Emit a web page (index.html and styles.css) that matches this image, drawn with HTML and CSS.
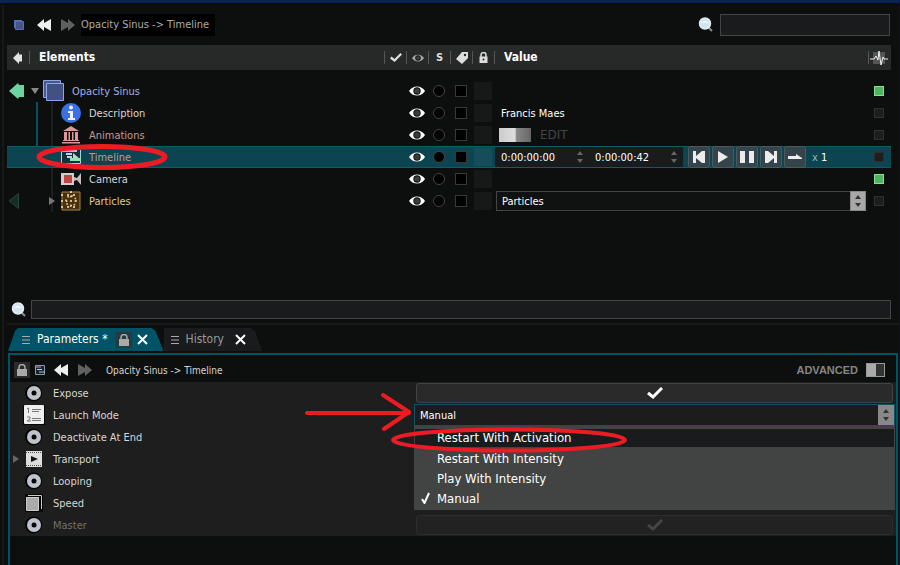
FILE: index.html
```
<!DOCTYPE html>
<html lang="en">
<head>
    <meta charset="UTF-8">
    <meta name="viewport" content="width=device-width, initial-scale=1.0">
    <title>Opacity Sinus</title>
    <link rel="stylesheet" href="styles.css">
</head>
<body>
    <!-- icons used more than once -->
    <svg class="sprite" aria-hidden="true">
        <symbol id="rewind" viewBox="0 0 14 12"><path d="M7 0v4l7-4v12L7 8v4L0 6z"/></symbol>
        <symbol id="check" viewBox="0 0 16 12"><path d="M1 6l5 4 9-9" fill="none" stroke="currentColor" stroke-width="3"/></symbol>
        <symbol id="eye" viewBox="0 0 16 10"><path d="M0 5Q3 .5 8 .5T16 5q-3 4.500-8 4.500T0 5z" fill="currentColor"/><circle cx="8" cy="5" r="3.700" fill="#0d0f0e"/><circle cx="8" cy="5" r="2.700" fill="#3a3c3c"/></symbol>
        <symbol id="lock" viewBox="0 0 10 12"><path d="M2 6V3.500a3 3 0 0 1 6 0V6" fill="none" stroke="currentColor" stroke-width="1.500"/><path d="M0 5h10v7H0z"/></symbol>
        <symbol id="glass" viewBox="0 0 16 16"><path d="M10 10l4 4" stroke="#8a8f92" stroke-width="2"/><circle cx="7" cy="6.500" r="5.500" fill="#cfe6f2" stroke="#e8eced" stroke-width="1.500"/><path d="M3 6q4-4 8 0-4-1-8 0z" fill="#fff"/></symbol>
        <symbol id="updown" viewBox="0 0 6 12"><path d="M3 0l3 4H0zM0 8h6l-3 4z"/></symbol>
        <symbol id="cross" viewBox="0 0 11 11"><path d="M1 1l9 9M10 1l-9 9" stroke="#fff" stroke-width="2"/></symbol>
        <symbol id="menu" viewBox="0 0 8 8"><path d="M0 .5h8M0 4h8M0 7.500h8" stroke="currentColor"/></symbol>
        <symbol id="ring" viewBox="0 0 18 18"><circle cx="8.500" cy="9" r="8.500" fill="#050505"/><circle cx="9" cy="9" r="7" fill="#bfc4cb"/><circle cx="9" cy="9" r="2.500" fill="#050505"/></symbol>
        <symbol id="skip" viewBox="0 0 14 12"><path d="M1 0h3v5l6-5h3v12h-3L4 7v5H1z"/></symbol>
    </svg>

    <main>
        <header class="toolbar">
            <svg class="layers-small" viewBox="0 0 10 10"><path d="M0 0h8v8H0z" fill="#5b6fae"/><path d="M1.500 1.500h8v8h-8z" fill="#44558c" stroke="#5b6fae"/></svg>
            <button class="icon-btn" aria-label="Back"><svg class="nav"><use href="#rewind"/></svg></button>
            <button class="icon-btn forward" aria-label="Forward"><svg class="nav"><use href="#rewind"/></svg></button>
            <span class="path">Opacity Sinus -&gt; Timeline</span>
            <svg class="glass"><use href="#glass"/></svg>
            <input class="search" type="text" aria-label="Search elements">
        </header>

        <section class="tree">
            <div class="row head">
                <div class="title">
                    <svg class="head-arrow" viewBox="0 0 9 12"><path d="M0 6l6-6v2.500h3v7H6V12z" fill="#e2e2e2"/></svg>
                    <span class="elements">Elements</span>
                </div>
                <span class="cell"><svg class="check-small"><use href="#check"/></svg></span>
                <span class="cell"><svg class="eye-small"><use href="#eye"/></svg></span>
                <span class="cell">S</span>
                <span class="cell"><svg class="tag" viewBox="0 0 12 12"><path d="M6 0h6v6l-6 6-6-5z" fill="#ddd"/><circle cx="9" cy="3" r="1.200" fill="#262827"/></svg></span>
                <span class="cell"><svg class="lock-small" viewBox="0 0 9 11"><path d="M2 5V3a2.500 2.500 0 0 1 5 0v2" fill="none" stroke="#ddd" stroke-width="1.500"/><path d="M.5 4.500h8V11h-8z" fill="#ddd"/><circle cx="4.500" cy="7.500" r="1" fill="#262827"/></svg></span>
                <span class="cell value-head">Value</span>
                <span class="cell pulse-head"><svg class="pulse" viewBox="0 0 18 14"><path d="M3 1h12v12H3z" fill="#555"/><path d="M0 8h4l2-3 2 4 1-9 2 14 2-8 1 2h4" fill="none" stroke="#eee"/></svg></span>
            </div>

            <div class="row">
                <div class="name root">
                    <svg class="pin" viewBox="0 0 15 16"><path d="M0 8l9-8 1 2h5v12h-5l-1 2z" fill="#6dd3a0"/></svg>
                    <svg class="fold" viewBox="0 0 8 6"><path d="M0 0h8L4 6z" fill="#888"/></svg>
                    <svg class="layers" viewBox="0 0 22 22"><path d="M.5.5h17v17H.5z" fill="#4a5a8f" stroke="#8fa5e8"/><path d="M3.500 3.500h17v17h-17z" fill="#425082" stroke="#8fa5e8"/></svg>
                    <span class="lavender">Opacity Sinus</span>
                </div>
                <svg class="eye"><use href="#eye"/></svg><i class="solo"></i><i class="tag-box"></i><i class="lock-box"></i>
                <div></div>
                <i class="led on"></i>
            </div>
            <div class="row">
                <div class="name branch">
                    <svg class="item" viewBox="0 0 20 20"><circle cx="10" cy="10" r="10" fill="#3a70e2"/><circle cx="10" cy="4.500" r="2" fill="#eef"/><path d="M7 8h5v7h2v2H7v-2h2v-5H7z" fill="#eef"/></svg>
                    <span>Description</span>
                </div>
                <svg class="eye"><use href="#eye"/></svg><i class="solo"></i><i class="tag-box"></i><i class="lock-box"></i>
                <div class="value text">Francis Maes</div>
                <i class="led"></i>
            </div>
            <div class="row">
                <div class="name branch">
                    <svg class="item" viewBox="0 0 20 20"><path d="M10 1l8 5H2zM3 7h3v8H3zM7.500 7h1.500v8H7.500zM11 7h1.500v8H11zM14 7h3v8h-3zM2 15h16v1H2zM1 17h18v1.500H1z" fill="#d99a98"/></svg>
                    <span class="rose">Animations</span>
                </div>
                <svg class="eye"><use href="#eye"/></svg><i class="solo"></i><i class="tag-box"></i><i class="lock-box"></i>
                <div class="value anim"><span class="ramp"></span><button class="edit">EDIT</button></div>
                <i class="led"></i>
            </div>
            <div class="row selected">
                <div class="name branch last-branch">
                    <svg class="item" viewBox="0 0 20 20"><path d="M0 3h20v14H0z" fill="#12313b"/><path d="M.5 3v13.500h19V3" fill="none" stroke="#a9d3e8"/><path d="M1 3h15v2H1z" fill="#ee9ada"/><path d="M5 6h6v2H5zM6 9h5v2H6z" fill="#c8cbf5"/><path d="M12 6l7 6h-7z" fill="#c5d3d0"/><path d="M9 11h11v3H9z" fill="#8fe5ab"/></svg>
                    <span class="rose">Timeline</span>
                    <svg class="mark mark-timeline" viewBox="0 0 134 28"><ellipse cx="67" cy="14" rx="63" ry="10.500" fill="none" stroke="#ed1c24" stroke-width="5"/></svg>
                </div>
                <svg class="eye"><use href="#eye"/></svg><i class="solo"></i><i class="tag-box"></i><i class="lock-box"></i>
                <div class="value time">
                    <div class="times">
                        <input type="text" value="0:00:00:00" aria-label="Position">
                        <svg class="updown"><use href="#updown"/></svg>
                        <input type="text" value="0:00:00:42" aria-label="Duration">
                        <svg class="updown"><use href="#updown"/></svg>
                    </div>
                    <div class="transport">
                        <button aria-label="To start"><svg><use href="#skip"/></svg></button>
                        <button aria-label="Play"><svg viewBox="0 0 14 12"><path d="M2 0l10 6-10 6z"/></svg></button>
                        <button aria-label="Pause"><svg viewBox="0 0 14 12"><path d="M0 0h5v12H0zM9 0h5v12H9z"/></svg></button>
                        <button aria-label="To end"><svg class="flip"><use href="#skip"/></svg></button>
                        <button aria-label="Direction"><svg viewBox="0 0 14 12"><path d="M0 5h8V3l6 4v1H0z"/></svg></button>
                    </div>
                    <span class="rate"><span class="times-sign">x</span> 1</span>
                </div>
                <i class="led"></i>
            </div>
            <div class="row">
                <div class="name branch tail">
                    <svg class="item" viewBox="0 0 20 20"><path d="M0 4h13v12H0z" fill="#d5cccc"/><path d="M3 6h8v8H3z" fill="#c0443f"/><path d="M13 8l3 1 4-5v12l-4-5-3 1z" fill="#c9bcbc"/></svg>
                    <span>Camera</span>
                </div>
                <svg class="eye"><use href="#eye"/></svg><i class="solo"></i><i class="tag-box"></i><i class="lock-box"></i>
                <div></div>
                <i class="led on"></i>
            </div>
            <div class="row">
                <div class="name branch tail parent">
                    <svg class="pin-off" viewBox="0 0 10 16"><path d="M0 8l9.500-7.500v15z" fill="#182c25" stroke="#24483a"/></svg>
                    <svg class="fold-right" viewBox="0 0 6 8"><path d="M0 0l6 4-6 4z" fill="#777"/></svg>
                    <svg class="item" viewBox="0 0 20 20"><path d="M1 1h18v18H1z" fill="#47300f" stroke="#a88248"/><g fill="none" stroke="#fbe9c0" stroke-width="2" stroke-linecap="round"><path d="M1 4h18M1 16h18" stroke-dasharray="0 6"/><path d="M1 10h18M10 1v18" stroke-dasharray="0 4.500"/><circle cx="10" cy="10" r="5" stroke="#dcb878" stroke-dasharray="0 4"/></g></svg>
                    <label class="sand" for="particles">Particles</label>
                </div>
                <svg class="eye"><use href="#eye"/></svg><i class="solo"></i><i class="tag-box"></i><i class="lock-box"></i>
                <div class="value pick">
                    <select id="particles"><option>Particles</option></select>
                    <span class="stepper"><svg class="updown"><use href="#updown"/></svg></span>
                </div>
                <i class="led"></i>
            </div>
        </section>

        <div class="filter">
            <svg class="glass"><use href="#glass"/></svg>
            <input class="search" type="text" aria-label="Filter">
        </div>

        <nav class="tabs">
            <div class="tab active">
                <svg class="grip"><use href="#menu"/></svg>
                <span>Parameters *</span>
                <button class="lock-btn" aria-label="Lock"><svg class="lock"><use href="#lock"/></svg></button>
                <button class="icon-btn" aria-label="Close Parameters"><svg class="cross"><use href="#cross"/></svg></button>
            </div>
            <div class="tab">
                <svg class="grip"><use href="#menu"/></svg>
                <span>History</span>
                <button class="icon-btn" aria-label="Close History"><svg class="cross"><use href="#cross"/></svg></button>
            </div>
        </nav>

        <section class="panel">
            <header class="panel-bar">
                <button class="lock-btn" aria-label="Lock"><svg class="lock"><use href="#lock"/></svg></button>
                <svg class="timeline-small" viewBox="0 0 10 10"><path d="M.5.500h9v9h-9z" fill="#18232c" stroke="#8d9db4"/><path d="M0 2h6" stroke="#d58cc8"/><path d="M2 4.500h5" stroke="#c6c8ee"/><path d="M4 7h6" stroke="#8bd3a0"/></svg>
                <button class="icon-btn" aria-label="Back"><svg class="nav"><use href="#rewind"/></svg></button>
                <button class="icon-btn forward" aria-label="Forward"><svg class="nav"><use href="#rewind"/></svg></button>
                <span class="panel-path">Opacity Sinus -&gt; Timeline</span>
                <label class="advanced">ADVANCED <input type="checkbox" class="switch"></label>
            </header>

            <div class="params">
                <div class="param">
                    <label for="expose"><svg class="kind"><use href="#ring"/></svg>Expose</label>
                    <div class="toggle"><input type="checkbox" id="expose" checked><svg><use href="#check"/></svg></div>
                </div>
                <div class="param">
                    <label for="launch"><svg class="kind-wide" viewBox="0 0 22 20"><path d="M0 0h22v20H0z" fill="#050505"/><rect x="1" y="0" width="20" height="19" rx="1" fill="#eee"/><path d="M4 4l1.500-1v5M4 12h3v2l-3 2h4" fill="none" stroke="#777"/><path d="M9 4.500h9M9 6.500h7M9 13.500h9M9 15.500h9" stroke="#777"/></svg>Launch Mode</label>
                    <svg class="mark mark-arrow" viewBox="0 0 108 42"><path d="M3 21h102M79 3l26 17-25 17" fill="none" stroke="#ed1c24" stroke-width="4" stroke-linecap="round" stroke-linejoin="round"/></svg>
                    <div class="combo">
                        <select id="launch"><option>Manual</option></select>
                        <span class="stepper"><svg class="updown"><use href="#updown"/></svg></span>
                        <div class="options">
                            <button class="option hover"><svg class="mark mark-option" viewBox="0 0 238 28"><ellipse cx="119" cy="14" rx="116" ry="10.500" fill="none" stroke="#ed1c24" stroke-width="4"/></svg>Restart With Activation</button>
                            <button class="option">Restart With Intensity</button>
                            <button class="option">Play With Intensity</button>
                            <button class="option"><svg class="tick" viewBox="0 0 9 12"><path d="M1 7l2.500 4L8 1" fill="none" stroke="#fff" stroke-width="2"/></svg>Manual</button>
                        </div>
                    </div>
                </div>
                <div class="param">
                    <span class="label"><svg class="kind"><use href="#ring"/></svg>Deactivate At End</span>
                </div>
                <div class="param">
                    <span class="label foldable"><svg class="fold-right" viewBox="0 0 6 8"><path d="M0 0l6 4-6 4z" fill="#666"/></svg><svg class="kind" viewBox="0 0 18 18"><path d="M1 1h16v16H1z" fill="#ddd"/><path d="M1 2.500h16M1 15.500h16" stroke="#555" stroke-dasharray="1 1"/><path d="M6 6l7 3-7 3z" fill="#111"/></svg>Transport</span>
                </div>
                <div class="param">
                    <span class="label"><svg class="kind"><use href="#ring"/></svg>Looping</span>
                </div>
                <div class="param">
                    <span class="label"><svg class="kind" viewBox="0 0 18 18"><path d="M0 0h18v18H0z" fill="#050505"/><path d="M1 3h13v13H1z" fill="#aaa"/><path d="M1.500 3.500h12v13h-12zM3 1.500h13.500V15" fill="none" stroke="#ccc"/></svg>Speed</span>
                </div>
                <div class="param disabled">
                    <label for="master"><svg class="kind"><use href="#ring"/></svg>Master</label>
                    <div class="toggle"><input type="checkbox" id="master" checked disabled><svg><use href="#check"/></svg></div>
                </div>
            </div>
        </section>
    </main>
</body>
</html>
```

FILE: styles.css
```
*{
    box-sizing: border-box;
}

body{
    margin: 0;
    background-color: #0d0f0e;
    color: #d6d6d6;
    font-family: "DejaVu Sans Condensed", "DejaVu Sans", sans-serif;
    font-size: 11px;
    line-height: 17px;
}

button, input, select{
    font: inherit;
    color: inherit;
    margin: 0;
    padding: 0;
    border: none;
    border-radius: 0;
    background: none;
    appearance: none;
}

svg{
    display: block;
    flex: none;
    fill: currentColor;
}

.sprite{
    display: none;
}

main{
    display: flex;
    flex-direction: column;
    min-height: 100vh;
    padding-left: 7px;
    border-top: 3px solid #0b2355;
    border-right: 1px solid #120c3c;
    background: linear-gradient(#171918, #171918) 2px 2px / 2px 100% no-repeat;
}

/* top toolbar */
.toolbar{
    display: flex;
    align-items: center;
    height: 42px;
    margin-right: 8px;
    padding: 2px 1px 0 7px;
}

.layers-small, .timeline-small{
    width: 10px;
    height: 10px;
}

.icon-btn{
    display: flex;
    color: #eee;
}

.nav{
    width: 14px;
    height: 12px;
}

.forward{
    color: #606060;
    margin-left: 10px;
    transform: scaleX(-1);
}

.toolbar .layers-small{
    margin-right: 13px;
}

.path{
    background-color: #000;
    color: #adadad;
    margin-left: 6px;
    height: 22px;
    line-height: 22px;
    padding-right: 6px;
}

.glass{
    width: 16px;
    height: 16px;
}

.toolbar .glass{
    margin-left: auto;
    margin-right: 6px;
}

.search{
    background-color: #1a1b1c;
    border: 1px solid #434544;
    width: 170px;
    height: 22px;
    padding: 0 4px;
}

/* element tree */
.tree{
    margin-right: 8px;
}

.row{
    display: grid;
    grid-template-columns: minmax(0, 1fr) repeat(5, 22px) minmax(0, 1fr) 20px;
    grid-template-rows: 100%;
    align-items: center;
    justify-items: center;
    height: 22px;
}

.row > :first-child, .value{
    justify-self: stretch;
}

.row.head{
    height: 25px;
    background-color: #272928;
    margin-bottom: 10px;
    color: #fff;
    font-size: 12px;
    font-weight: bold;
}

.title{
    display: flex;
    align-items: center;
    padding-left: 6px;
}

.head-arrow{
    width: 9px;
    height: 12px;
}

.elements{
    border-left: 1px solid #555;
    margin-left: 7px;
    padding-left: 9px;
    line-height: 13px;
}

.cell{
    display: flex;
    align-items: center;
    justify-content: center;
    justify-self: stretch;
    height: 13px;
    border-left: 1px solid #555;
    color: #ddd;
    font-size: 11px;
}

.value-head{
    justify-content: flex-start;
    padding-left: 9px;
    color: #fff;
    font-size: 12px;
}

.pulse-head{
    margin: 0 3px 0 -3px;
}

.check-small{
    width: 12px;
    height: 9px;
}

.eye-small{
    width: 12px;
    height: 8px;
    color: #aaa;
}

.tag{
    width: 12px;
    height: 12px;
}

.lock-small{
    width: 9px;
    height: 11px;
}

.pulse{
    width: 18px;
    height: 14px;
}

/* the name runs on under the check column */
.name{
    grid-column: span 2;
    position: relative;
    display: flex;
    align-items: center;
    align-self: stretch;
}

.root{
    padding-left: 2px;
}

.pin{
    width: 15px;
    height: 16px;
    margin-right: 7px;
}

.fold{
    width: 8px;
    height: 6px;
    margin-right: 4px;
}

.layers{
    width: 22px;
    height: 22px;
    margin-right: 7px;
}

.branch{
    padding-left: 54px;
    background: linear-gradient(#0c5060, #0c5060) 29px 0 / 2px 100% no-repeat,
        linear-gradient(#1d1f1e, #1d1f1e) 44px 0 / 2px 100% no-repeat;
}

.last-branch{
    background: none;
}

.tail{
    background: linear-gradient(#1d1f1e, #1d1f1e) 44px 0 / 2px 100% no-repeat;
}

.item{
    width: 20px;
    height: 20px;
    margin-right: 8px;
}

.parent{
    padding-left: 2px;
}

.pin-off{
    width: 10px;
    height: 16px;
}

.fold-right{
    width: 6px;
    height: 8px;
}

.parent .fold-right{
    margin-left: 30px;
    margin-right: 6px;
}

.lavender{
    color: #a3b0e6;
}

.rose{
    color: #c19a98;
}

.sand{
    color: #e0c893;
}

.eye{
    width: 16px;
    height: 10px;
    color: #fff;
}

.solo{
    width: 12px;
    height: 12px;
    border: 1px solid #444;
    border-radius: 50%;
    background-color: #000;
}

.tag-box{
    width: 12px;
    height: 12px;
    border: 1px solid #383838;
    background-color: #000;
}

.lock-box{
    width: 18px;
    height: 18px;
    border-radius: 1px;
    background-color: #171918;
}

.led{
    width: 10px;
    height: 10px;
    justify-self: start;
    margin-left: 3px;
    border: 1px solid #303030;
    background-color: #1d1d1d;
}

.led.on{
    border-color: #7ee293;
    background-color: #53b164;
}

.value{
    display: flex;
    align-items: center;
    color: #fff;
}

.text{
    padding-left: 7px;
}

.anim{
    padding-left: 5px;
}

.ramp{
    width: 32px;
    height: 14px;
    background: linear-gradient(to right, #ccc, #ddd 50%, #888 55%, #666);
}

.edit{
    margin-left: 9px;
    color: #444;
    font-family: "DejaVu Sans", sans-serif;
    font-size: 12px;
}

.selected{
    background-color: #0c4452;
    border: solid #0f5a6b;
    border-width: 1px 0;
}

.selected .lock-box{
    background-color: #154d5b;
}

.times{
    display: flex;
    align-items: center;
    width: 188px;
    height: 20px;
    margin-left: 1px;
    padding-left: 6px;
    background-color: #1a1b1c;
}

.times input{
    width: 76px;
}

.updown{
    width: 6px;
    height: 12px;
}

.times .updown{
    color: #666;
    margin-right: 12px;
}

.transport{
    display: flex;
    gap: 2px;
    margin-left: 5px;
}

.transport button{
    display: flex;
    align-items: center;
    justify-content: center;
    width: 22px;
    height: 22px;
    border: 1px solid #4b5a5e;
    border-radius: 3px;
    background-color: #33444a;
    color: #ececec;
}

.transport svg{
    width: 14px;
    height: 12px;
}

.flip{
    transform: scaleX(-1);
}

.rate{
    margin-left: 6px;
    white-space: nowrap;
}

.times-sign{
    color: #9fb0b5;
}

.pick{
    position: relative;
    align-self: stretch;
    margin: 1px 5px 1px 2px;
}

.pick select{
    width: 100%;
    height: 20px;
    padding-left: 5px;
    border: 1px solid #434544;
    background-color: #101111;
}

.stepper{
    position: absolute;
    top: 0;
    right: 0;
    display: flex;
    align-items: center;
    justify-content: center;
    width: 16px;
    height: 20px;
    background-color: #a8a8a8;
    border: 1px solid #888;
    color: #333;
    pointer-events: none;
}

.filter{
    display: flex;
    align-items: center;
    margin: 88px 8px 0 0;
    padding-left: 4px;
    gap: 4px;
}

.filter .search{
    flex: 1;
    height: 19px;
}

/* tabs */
.tabs{
    display: flex;
    height: 30px;
    margin-top: 4px;
    padding: 3px 0 2px 1px;
    border-top: 2px solid #171918;
    font-size: 12px;
}

.tab{
    display: flex;
    align-items: center;
    padding: 0 16px 0 7px;
    background-color: #1a1b1c;
    color: #999;
    clip-path: polygon(0 0, calc(100% - 11px) 0, calc(100% - 7px) 3px, 100% 100%, 0 100%);
}

.tab.active{
    padding: 0 16px 0 14px;
    background-color: #005366;
    color: #fff;
    clip-path: polygon(0 100%, 7px 3px, 10px 0, calc(100% - 12px) 0, calc(100% - 8px) 3px, 100% 100%);
}

.grip{
    width: 8px;
    height: 8px;
    margin-right: 7px;
    color: #aaa;
}

.cross{
    width: 11px;
    height: 11px;
}

.lock-btn{
    display: flex;
    align-items: center;
    justify-content: center;
    width: 16px;
    height: 16px;
    background-color: #2b2b2b;
    color: #aaa;
}

.lock{
    width: 10px;
    height: 12px;
}

.tab .lock-btn{
    margin: 0 5px 0 8px;
    background-color: #28383d;
}

.tab span + .icon-btn{
    margin-left: 11px;
}

/* parameters panel */
.panel{
    flex: 1;
    margin: 0 1px;
    border: 2px solid #005366;
    border-bottom: none;
}

.panel-bar{
    display: flex;
    align-items: center;
    height: 27px;
    padding: 3px 11px 0 4px;
}

.timeline-small{
    margin: 0 9px 0 5px;
}

.panel-path{
    margin-left: 14px;
    font-size: 10px;
}

.advanced{
    display: flex;
    align-items: center;
    gap: 8px;
    margin-left: auto;
    color: #858585;
    font-family: "Liberation Sans", Arial, sans-serif;
    font-size: 11px;
    font-weight: bold;
}

.switch{
    width: 19px;
    height: 14px;
    border: 1px solid #999;
    background: linear-gradient(to right, #aaa 50%, #333 50%);
}

.params{
    background-color: #1e1e1e;
}

.param{
    position: relative;
    display: grid;
    grid-template-columns: 404px 1fr;
    align-items: center;
    height: 22px;
}

.param label, .label{
    display: flex;
    align-items: center;
    padding-left: 15px;
}

.param .foldable{
    padding-left: 3px;
}

.foldable .fold-right{
    margin-right: 6px;
}

.kind{
    width: 18px;
    height: 18px;
    margin-right: 10px;
}

.kind-wide{
    width: 22px;
    height: 20px;
    margin: 0 8px 0 -2px;
}

.toggle{
    display: grid;
    place-items: center;
    height: 20px;
    margin: 0 3px 0 2px;
    color: #fff;
}

.toggle input{
    grid-area: 1 / 1;
    width: 100%;
    height: 20px;
    border: 1px solid #434343;
    border-radius: 3px;
    background-color: #2a2a2a;
}

.toggle svg{
    grid-area: 1 / 1;
    width: 16px;
    height: 12px;
    pointer-events: none;
}

.disabled{
    color: #707070;
}

.disabled .toggle{
    color: #444;
}

.disabled .toggle input{
    border-color: #2d2d2d;
    background-color: #222;
}

.combo{
    position: relative;
    height: 22px;
    margin-right: 1px;
}

.combo select{
    display: block;
    width: 100%;
    height: 22px;
    padding-left: 5px;
    border: 1px solid #125363;
    background-color: #1c1c1c;
    color: #fff;
}

.combo .stepper{
    top: 1px;
    right: 1px;
    background-color: #888;
}

.options{
    position: absolute;
    z-index: 2;
    top: 22px;
    left: 0;
    right: 0;
    padding: 3px 1px 1px;
    background-color: #424443;
}

.option{
    position: relative;
    display: block;
    width: 100%;
    height: 20px;
    padding-left: 22px;
    color: #fff;
    font-size: 13px;
    line-height: 20px;
    text-align: left;
}

.hover{
    height: 18px;
    line-height: 18px;
    margin-bottom: 2px;
    background-color: #1a1b1c;
}

.tick{
    position: absolute;
    top: 3px;
    left: 6px;
    width: 9px;
    height: 12px;
}

/* red pen marks */
.mark{
    position: absolute;
    z-index: 3;
    pointer-events: none;
}

.mark-timeline{
    top: -4px;
    left: 28px;
    width: 134px;
    height: 28px;
}

.mark-arrow{
    top: -12px;
    left: 294px;
    width: 108px;
    height: 42px;
}

.mark-option{
    top: -3px;
    left: -25px;
    width: 238px;
    height: 28px;
}
```
